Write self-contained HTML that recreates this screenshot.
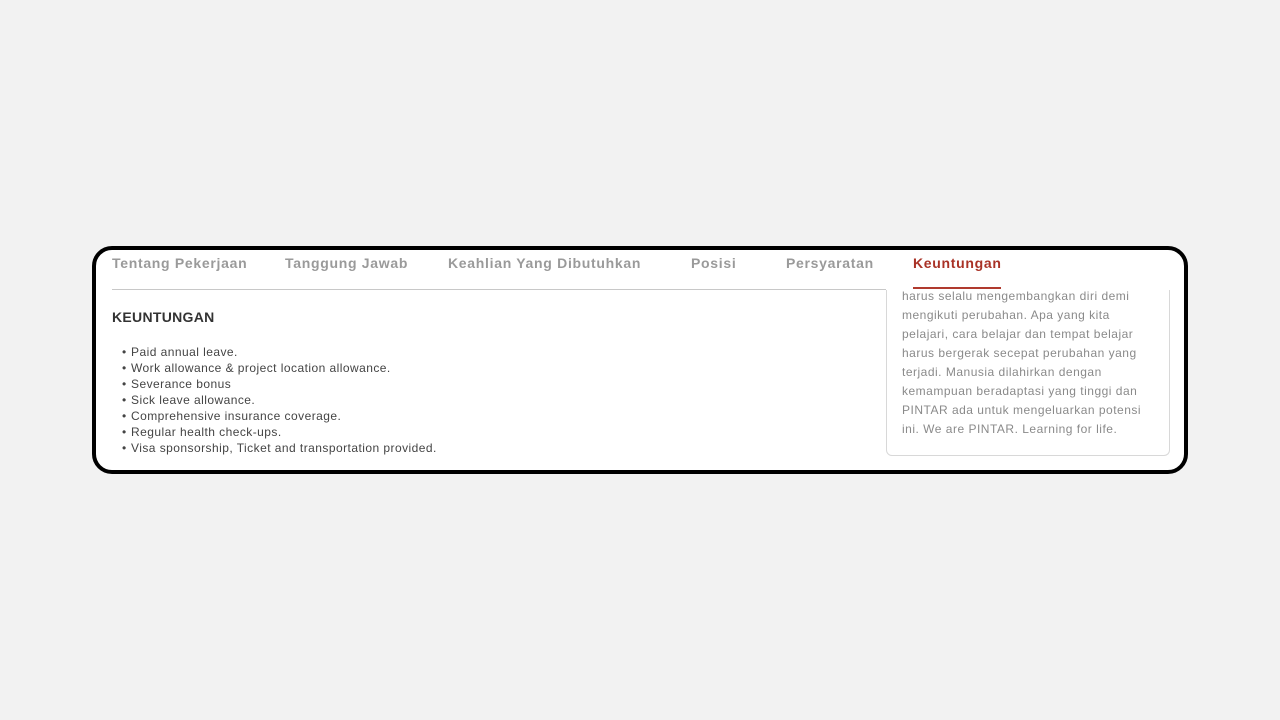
<!DOCTYPE html>
<html><head><style>
body{margin:0;width:1280px;height:720px;background:#f2f2f2;font-family:"Liberation Sans",sans-serif;position:relative;overflow:hidden}
.frame{position:absolute;left:92px;top:246px;width:1088px;height:220px;border:4px solid #000;border-radius:20px;background:#fff;overflow:hidden}
.tab{position:absolute;top:5px;font-size:14px;font-weight:bold;color:#9a9a9a;white-space:nowrap;letter-spacing:0.7px}
.line{position:absolute;left:16px;top:39px;width:774px;height:1px;background:#c8c8c8}
.ul{position:absolute;left:817px;top:37px;width:88px;height:2px;background:#b03a2e}
h3{position:absolute;left:16px;top:59px;margin:0;font-size:14px;color:#333;letter-spacing:0.3px}
ul{position:absolute;left:16px;top:94px;margin:0;padding:0;list-style:none;font-size:12px;color:#444;letter-spacing:0.45px}
li{height:16px;line-height:16px}
li:before{content:"•";display:inline-block;width:9px;margin-left:10px}
.card{position:absolute;left:790px;top:40px;width:282px;height:165px;border:1px solid #d8d8d8;border-top:none;border-radius:0 0 6px 6px;overflow:hidden}
.card p{margin:0;position:absolute;left:15px;bottom:16px;width:245px;font-size:12px;line-height:19px;color:#8a8a8a;letter-spacing:0.5px}
</style></head><body>
<div class="frame">
<div class="line"></div>
<div class="tab" style="left:16px">Tentang Pekerjaan</div>
<div class="tab" style="left:189px">Tanggung Jawab</div>
<div class="tab" style="left:352px">Keahlian Yang Dibutuhkan</div>
<div class="tab" style="left:595px">Posisi</div>
<div class="tab" style="left:690px">Persyaratan</div>
<div class="tab" style="left:817px;color:#a93226">Keuntungan</div>
<div class="card"><p>harus selalu mengembangkan diri demi mengikuti perubahan. Apa yang kita pelajari, cara belajar dan tempat belajar harus bergerak secepat perubahan yang terjadi. Manusia dilahirkan dengan kemampuan beradaptasi yang tinggi dan PINTAR ada untuk mengeluarkan potensi ini. We are PINTAR. Learning for life.</p></div>
<div class="ul"></div>
<h3>KEUNTUNGAN</h3>
<ul>
<li>Paid annual leave.</li>
<li>Work allowance &amp; project location allowance.</li>
<li>Severance bonus</li>
<li>Sick leave allowance.</li>
<li>Comprehensive insurance coverage.</li>
<li>Regular health check-ups.</li>
<li>Visa sponsorship, Ticket and transportation provided.</li>
</ul>
</div>
</body></html>
